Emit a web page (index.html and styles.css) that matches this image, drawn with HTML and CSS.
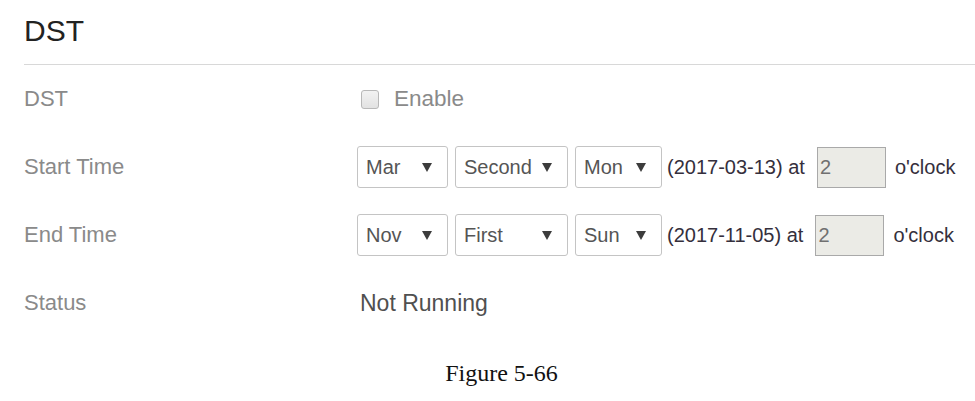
FILE: index.html
```html
<!DOCTYPE html>
<html>
<head>
<meta charset="utf-8">
<link rel="stylesheet" href="styles.css">
</head>
<body>
<div class="panel">
  <h1 class="title">DST</h1>
  <div class="form">
    <div class="row">
      <div class="label">DST</div>
      <div class="value">
        <span class="checkbox"></span>
        <span class="enable">Enable</span>
      </div>
    </div>
    <div class="row">
      <div class="label">Start Time</div>
      <div class="value">
        <div class="select w-month"><span>Mar</span><i class="arrow"></i></div>
        <div class="select w-week"><span>Second</span><i class="arrow"></i></div>
        <div class="select w-day"><span>Mon</span><i class="arrow"></i></div>
        <span class="date">(2017-03-13) at</span>
        <div class="hour">2</div>
        <span class="oclock">o'clock</span>
      </div>
    </div>
    <div class="row">
      <div class="label">End Time</div>
      <div class="value">
        <div class="select w-month"><span>Nov</span><i class="arrow"></i></div>
        <div class="select w-week"><span>First</span><i class="arrow"></i></div>
        <div class="select w-day"><span>Sun</span><i class="arrow"></i></div>
        <span class="date">(2017-11-05) at</span>
        <div class="hour">2</div>
        <span class="oclock">o'clock</span>
      </div>
    </div>
    <div class="row">
      <div class="label">Status</div>
      <div class="value">
        <span class="status">Not Running</span>
      </div>
    </div>
  </div>
</div>
<p class="caption">Figure 5-66</p>
</body>
</html>
```

FILE: styles.css
```css
html, body {
  margin: 0;
  padding: 0;
  background: #fff;
}
body {
  font-family: "Liberation Sans", Arial, sans-serif;
  width: 975px;
  height: 401px;
  overflow: hidden;
}
.panel {
  padding-left: 24px;
}
.title {
  margin: 0;
  height: 65px;
  box-sizing: border-box;
  padding-top: 14px;
  font-size: 30px;
  line-height: 34px;
  font-weight: normal;
  color: #222;
  border-bottom: 1px solid #d8d8d8;
}
.form {
  display: flex;
  flex-direction: column;
}
.row {
  height: 68px;
  display: grid;
  grid-template-columns: 333px 1fr;
  align-items: center;
}
.label {
  font-size: 22px;
  color: #8a8a8a;
}
.value {
  display: flex;
  align-items: center;
}
.checkbox {
  width: 16px;
  height: 17px;
  margin-left: 4px;
  border: 1px solid #b8b8b8;
  border-radius: 3px;
  background: linear-gradient(#f2f2f2, #e2e2e2);
}
.enable {
  margin-left: 15px;
  font-size: 22.5px;
  color: #8a8a8a;
}
.select {
  height: 42px;
  box-sizing: border-box;
  border: 1px solid #c4c4c4;
  border-radius: 3px;
  display: flex;
  align-items: center;
  justify-content: space-between;
  padding: 0 15px 0 8px;
  font-size: 20px;
  color: #555;
  margin-right: 7px;
}
.w-month { width: 91px; }
.w-week { width: 113px; }
.w-day { width: 87px; margin-right: 5px; }
.arrow {
  width: 0;
  height: 0;
  border-left: 5px solid transparent;
  border-right: 5px solid transparent;
  border-top: 9px solid #3c3c3c;
}
.date {
  font-size: 20px;
  color: #352f3c;
}
.hour {
  width: 69px;
  height: 41px;
  box-sizing: border-box;
  margin-left: 12px;
  border: 1px solid #a9a9a9;
  background: #ebebe6;
  font-size: 20px;
  color: #707070;
  display: flex;
  align-items: center;
  padding-left: 2px;
}
.oclock {
  margin-left: 9px;
  font-size: 20px;
  color: #352f3c;
}
.status {
  margin-left: 3px;
  font-size: 23px;
  color: #505050;
}
.caption {
  margin: 0;
  padding-top: 22px;
  padding-left: 28px;
  text-align: center;
  font-family: "Liberation Serif", "Times New Roman", serif;
  font-size: 24px;
  line-height: 28px;
  color: #111;
}
```
